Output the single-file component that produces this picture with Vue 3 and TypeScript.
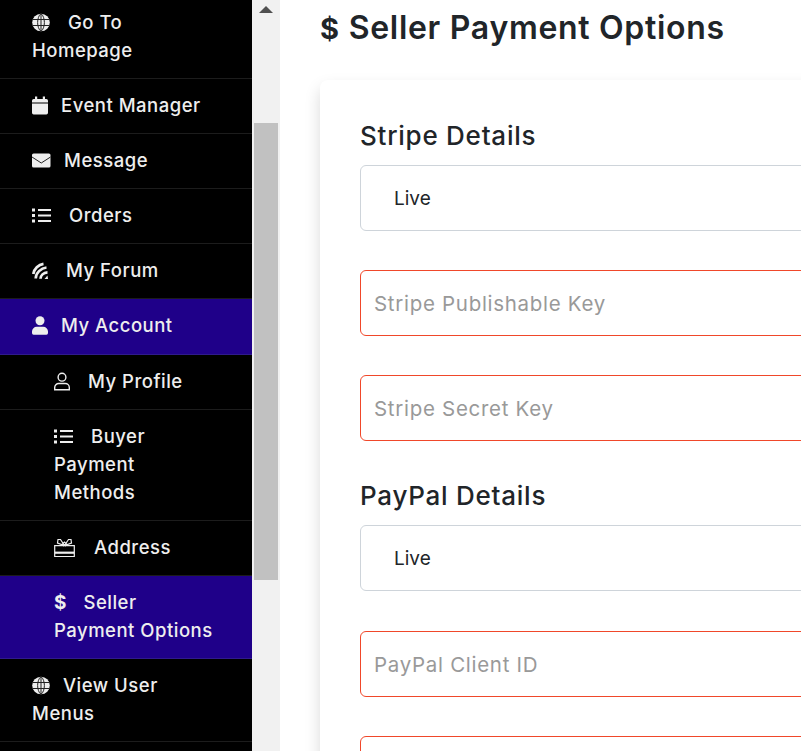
<template>
  <div class="page">
    <aside class="sidebar">
      <nav class="menu">
        <a
          v-for="item in items"
          :key="item.label"
          class="menu-item"
          :class="{ active: item.active, sub: item.sub }"
        >
          <span v-if="item.icon === 'dollar'" class="dollar" :style="{ marginRight: item.gap + 'px' }">$</span>
          <svg v-else class="icon" :style="{ width: item.iconWidth + 'px', marginRight: item.gap + 'px' }" :viewBox="`0 0 ${item.iconWidth} 19`">
            <template v-if="item.icon === 'globe'">
              <circle cx="9" cy="9.500" r="8.800" fill="#eee" />
              <path d="M.5 6.500h17M.5 12.500h17M9 .7v17.600M9 .7C4.500 4 4.500 15 9 18.300M9 .7C13.500 4 13.500 15 9 18.300" fill="none" stroke="#222" stroke-width="1" />
            </template>
            <template v-else-if="item.icon === 'calendar'">
              <path d="M3 .5h2.200v2.500h5.600V.5H13V3h1.300A1.700 1.700 0 0 1 16 4.700V6.500H0V4.700A1.700 1.700 0 0 1 1.700 3H3zM0 7.500h16v9.300a1.700 1.700 0 0 1-1.700 1.700H1.700A1.700 1.700 0 0 1 0 16.800z" fill="#eee" />
            </template>
            <template v-else-if="item.icon === 'mail'">
              <rect x="0" y="2.500" width="18.500" height="14" rx="1.600" fill="#eee" />
              <path d="M0 6l9.250 6 9.250-6" fill="none" stroke="#222" stroke-width="1" />
            </template>
            <template v-else-if="item.icon === 'list'">
              <path d="M0 2.500h3v3H0zM0 8h3v3H0zM0 13.500h3v3H0zM6 3h13v2H6zM6 8.500h13v2H6zM6 14h13v2H6z" fill="#eee" />
            </template>
            <template v-else-if="item.icon === 'forum'">
              <path d="M1.300 13C2 8 6.500 3.500 11.500 2.800M3.700 17.500C3.700 12 9 7 14.500 6.500M8.500 17.800C8.500 14.500 11.500 11.500 15.500 11.300" fill="none" stroke="#eee" stroke-width="2.700" />
              <path d="M12.500 18l3-3.500 .5 3.500z" fill="#eee" />
            </template>
            <template v-else-if="item.icon === 'user'">
              <circle cx="8" cy="4.700" r="4.500" fill="#eee" />
              <path d="M4.800 10.800h6.400A4.800 4.800 0 0 1 16 15.600v1.500a1.600 1.600 0 0 1-1.600 1.600H1.600A1.600 1.600 0 0 1 0 17.100v-1.500a4.800 4.800 0 0 1 4.800-4.800z" fill="#eee" />
            </template>
            <template v-else-if="item.icon === 'user-o'">
              <circle cx="8" cy="5.200" r="3.900" fill="none" stroke="#eee" stroke-width="1.400" />
              <path d="M4.700 11.500h6.600a4 4 0 0 1 4 4v2.300H.7v-2.300a4 4 0 0 1 4-4z" fill="none" stroke="#eee" stroke-width="1.400" />
            </template>
            <template v-else-if="item.icon === 'gift'">
              <path d="M.7 7.700h19.600v10.800H.7zM10.500 7.500 6.500 1.500H4L3.500 5zM10.500 7.500l4-6H17l.5 3.500zM7 7.500l3.500-3.500 3.500 3.500" fill="none" stroke="#eee" stroke-width="1.200" />
              <path d="M.7 13.600h19.600v2.200H.7z" fill="#eee" />
            </template>
          </svg>
          <span class="label">{{ item.label }}</span>
        </a>
      </nav>
    </aside>

    <div class="scrollbar">
      <div class="arrow"></div>
      <div class="thumb"></div>
    </div>

    <main class="content">
      <h1 class="title"><span class="title-icon">$</span>Seller Payment Options</h1>
      <section class="card">
        <h2 class="heading">Stripe Details</h2>
        <select class="field select">
          <option>Live</option>
        </select>
        <input class="field invalid" type="text" placeholder="Stripe Publishable Key" />
        <input class="field invalid" type="text" placeholder="Stripe Secret Key" />

        <h2 class="heading second">PayPal Details</h2>
        <select class="field select">
          <option>Live</option>
        </select>
        <input class="field invalid client" type="text" placeholder="PayPal Client ID" />
        <input class="field invalid" type="text" />
      </section>
    </main>
  </div>
</template>

<script setup lang="ts">
interface MenuItem {
  label: string
  icon: string
  iconWidth: number
  gap: number
  active?: boolean
  sub?: boolean
}

const items: MenuItem[] = [
  { label: 'Go To\nHomepage', icon: 'globe', iconWidth: 18, gap: 18 },
  { label: 'Event Manager', icon: 'calendar', iconWidth: 16, gap: 13 },
  { label: 'Message', icon: 'mail', iconWidth: 19, gap: 13 },
  { label: 'Orders', icon: 'list', iconWidth: 19, gap: 18 },
  { label: 'My Forum', icon: 'forum', iconWidth: 16, gap: 18 },
  { label: 'My Account', icon: 'user', iconWidth: 16, gap: 13, active: true },
  { label: 'My Profile', icon: 'user-o', iconWidth: 16, gap: 18, sub: true },
  { label: 'Buyer\nPayment\nMethods', icon: 'list', iconWidth: 19, gap: 18, sub: true },
  { label: 'Address', icon: 'gift', iconWidth: 21, gap: 19, sub: true },
  { label: 'Seller\nPayment Options', icon: 'dollar', iconWidth: 12, gap: 17, active: true, sub: true },
  { label: 'View User\nMenus', icon: 'globe', iconWidth: 18, gap: 13 },
]
</script>

<style>
html,
body {
  overflow: hidden;
}
</style>

<style scoped>
.page {
  display: flex;
  width: 801px;
  height: 751px;
  overflow: hidden;
  font-family: Inter, "Liberation Sans", sans-serif;
  background: #fff;
}

.sidebar {
  flex: 0 0 252px;
  height: 751px;
  overflow: hidden;
  background: #000;
}

.menu {
  margin-top: -4px;
}

.menu-item {
  display: block;
  padding: 12px 32px 14px;
  border-bottom: 1px solid #1c1c1c;
  color: #eee;
  font-size: 18.5px;
  font-weight: 500;
  letter-spacing: 0.5px;
  line-height: 28px;
}

.menu-item.sub {
  padding-left: 54px;
  padding-right: 20px;
}

.menu-item.active {
  background: #1f0089;
  border-bottom-color: #2f1a8c;
}

.menu-item.active:not(.sub) {
  padding-bottom: 15px;
}

.label {
  white-space: pre-line;
}

.icon {
  display: inline-block;
  height: 19px;
  vertical-align: -3px;
}

.dollar {
  font-size: 19px;
  font-weight: 700;
  letter-spacing: 0;
  line-height: 1;
}

.scrollbar {
  flex: 0 0 28px;
  display: flex;
  flex-direction: column;
  align-items: center;
  background: #f1f1f1;
}

.arrow {
  width: 0;
  height: 0;
  margin-top: 6px;
  margin-bottom: 110px;
  border-left: 7px solid transparent;
  border-right: 7px solid transparent;
  border-bottom: 7px solid #505050;
}

.thumb {
  width: 24px;
  height: 457px;
  background: #c1c1c1;
}

.content {
  flex: 0 0 auto;
  width: 900px;
  padding: 8px 0 0 40px;
  background: #fff;
}

.title {
  margin: 0 0 31px;
  color: #212529;
  font-size: 32px;
  font-weight: 600;
  letter-spacing: 0.7px;
  line-height: 40px;
}

.title-icon {
  margin-right: 9px;
  font-size: 29px;
  font-weight: 700;
}

.card {
  padding: 40px;
  border-radius: 8px;
  background: #fff;
  box-shadow: 0 8px 16px rgba(0, 0, 0, 0.15);
}

.heading {
  margin: 0 0 13px;
  color: #212529;
  font-size: 26px;
  font-weight: 500;
  letter-spacing: 0.75px;
  line-height: 32px;
}

.heading.second {
  margin-top: 39px;
  margin-bottom: 13px;
}

.field {
  display: block;
  box-sizing: border-box;
  width: 100%;
  height: 66px;
  margin-top: 39px;
  padding: 0 13px;
  border: 1px solid #ced4da;
  border-radius: 6px;
  outline: none;
  background: #fff;
  color: #212529;
  font-family: inherit;
  font-size: 20.5px;
  letter-spacing: 0.7px;
}

.heading + .field {
  margin-top: 0;
}

.field.client {
  margin-top: 40px;
}

.select {
  appearance: none;
  padding-left: 33px;
  font-size: 19px;
  letter-spacing: 0;
}

.invalid {
  border-color: #f0472a;
}

.invalid::placeholder {
  color: #999;
  opacity: 1;
}
</style>
